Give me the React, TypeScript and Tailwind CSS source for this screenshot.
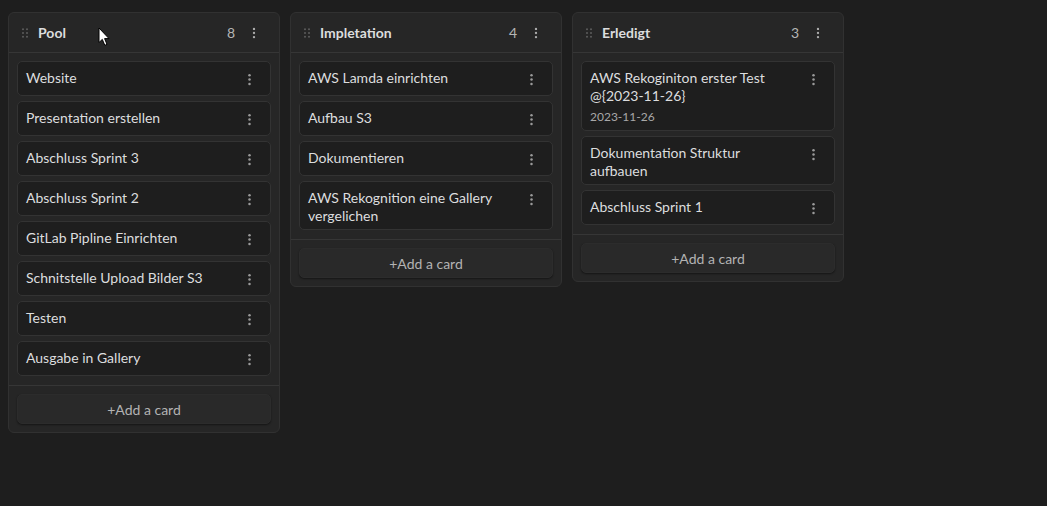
import React from "react";

type Card = { title: string; date?: string };
type Lane = { name: string; cards: Card[] };

const lanes: Lane[] = [
  {
    name: "Pool",
    cards: [
      { title: "Website" },
      { title: "Presentation erstellen" },
      { title: "Abschluss Sprint 3" },
      { title: "Abschluss Sprint 2" },
      { title: "GitLab Pipline Einrichten" },
      { title: "Schnitstelle Upload Bilder S3" },
      { title: "Testen" },
      { title: "Ausgabe in Gallery" },
    ],
  },
  {
    name: "Impletation",
    cards: [
      { title: "AWS Lamda einrichten" },
      { title: "Aufbau S3" },
      { title: "Dokumentieren" },
      { title: "AWS Rekognition eine Gallery vergelichen" },
    ],
  },
  {
    name: "Erledigt",
    cards: [
      { title: "AWS Rekoginiton erster Test @{2023-11-26}", date: "2023-11-26" },
      { title: "Dokumentation Struktur aufbauen" },
      { title: "Abschluss Sprint 1" },
    ],
  },
];

function Dots({ size, color }: { size: number; color: string }) {
  return (
    <svg width={size} height={size} viewBox="0 0 24 24" fill={color}>
      <circle cx="12" cy="5" r="2" />
      <circle cx="12" cy="12" r="2" />
      <circle cx="12" cy="19" r="2" />
    </svg>
  );
}

function Grip() {
  return (
    <svg width="6" height="10" viewBox="0 0 6 10" fill="#5c5c5c">
      <circle cx="1" cy="1.2" r="1" />
      <circle cx="5" cy="1.2" r="1" />
      <circle cx="1" cy="5" r="1" />
      <circle cx="5" cy="5" r="1" />
      <circle cx="1" cy="8.8" r="1" />
      <circle cx="5" cy="8.8" r="1" />
    </svg>
  );
}

function KanbanCard({ card }: { card: Card }) {
  return (
    <div className="flex items-start rounded-[5px] border border-[#333333] bg-[#1e1e1e] pb-[5px] pl-2 pr-[9px] pt-[6px]">
      <div className="mr-[10px] mt-[1px] min-w-0 flex-1">
        <div className="text-[14px] leading-[17.5px] text-[#dcddde]">{card.title}</div>
        {card.date && (
          <div className="mt-1 text-[12px] leading-[17px] text-[#a8a8a8]">{card.date}</div>
        )}
      </div>
      <button className="flex h-[22px] w-[24px] shrink-0 items-center justify-center">
        <Dots size={15} color="#9a9a9a" />
      </button>
    </div>
  );
}

function KanbanLane({ lane }: { lane: Lane }) {
  return (
    <div className="w-[272px] shrink-0 rounded-[6px] border border-[#313131] bg-[#262626]">
      <div className="flex h-[40px] items-center border-b border-[#363636] pl-[13px] pr-[18px]">
        <Grip />
        <span className="ml-[10px] pb-[1px] text-[14px] font-bold text-[#dcddde]">{lane.name}</span>
        <div className="flex-1" />
        <span className="text-[14px] text-[#b5b5b5]">{lane.cards.length}</span>
        <button className="ml-[12px] flex w-[14px] items-center justify-center">
          <Dots size={16} color="#acacac" />
        </button>
      </div>
      <div className="flex flex-col gap-[5px] px-2 pb-[9px] pt-2">
        {lane.cards.map((card) => (
          <KanbanCard key={card.title} card={card} />
        ))}
      </div>
      <div className="border-t border-[#363636] p-2">
        <button className="flex h-[30px] w-full items-center justify-center rounded-[5px] border border-[#2c2c2c] bg-[#292929] text-[14px] text-[#b3b3b3] shadow-[0_1px_2px_rgba(0,0,0,0.45)]">
          +Add a card
        </button>
      </div>
    </div>
  );
}

function Cursor() {
  return (
    <svg
      className="pointer-events-none absolute left-[98px] top-[27px]"
      width="13"
      height="20"
      viewBox="0 0 13 20"
    >
      <path
        d="M1 1 L1 15.5 L4.3 12.4 L6.8 18.3 L9 17.4 L6.6 11.6 L11 11.6 Z"
        fill="#ffffff"
        stroke="#000000"
        strokeWidth="1"
        strokeLinejoin="round"
      />
    </svg>
  );
}

export default function App() {
  return (
    <div
      className="relative h-[506px] w-full bg-[#1e1e1e]"
      style={{ fontFamily: '"Lato", "Noto Sans", sans-serif' }}
    >
      <div className="flex items-start gap-[10px] pl-2 pt-3">
        {lanes.map((lane) => (
          <KanbanLane key={lane.name} lane={lane} />
        ))}
      </div>
      <Cursor />
    </div>
  );
}
